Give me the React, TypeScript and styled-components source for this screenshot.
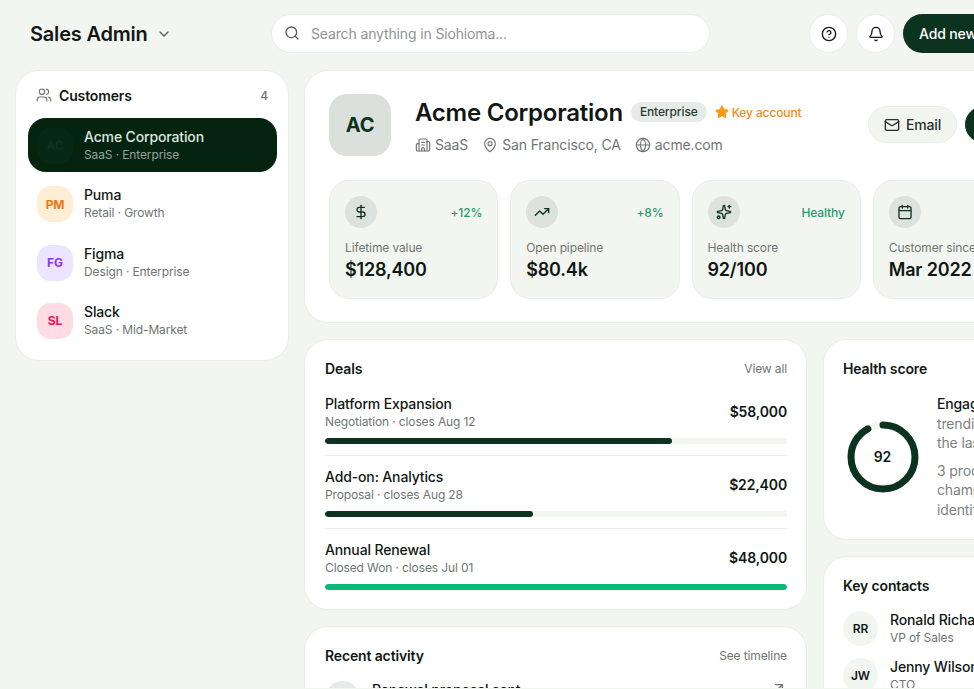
import React from 'react';
import styled, { createGlobalStyle } from 'styled-components';
import {
  ArrowUpRight,
  Bell,
  Building2,
  Calendar,
  ChevronDown,
  CircleHelp,
  DollarSign,
  Globe,
  Mail,
  MapPin,
  Search,
  Sparkles,
  Star,
  TrendingUp,
  Users,
} from 'lucide-react';

const DARK = '#0c3320';
const NIGHT = '#05240f';
const INK = '#111814';
const MUTED = '#6f7672';
const LINE = '#ebedea';
const SOFT = '#f3f5f1';

const customers = [
  { initials: 'AC', name: 'Acme Corporation', meta: 'SaaS · Enterprise', bg: '#072814', fg: '#0c3320', active: true },
  { initials: 'PM', name: 'Puma', meta: 'Retail · Growth', bg: '#ffedd5', fg: '#ea7a12' },
  { initials: 'FG', name: 'Figma', meta: 'Design · Enterprise', bg: '#ede4ff', fg: '#9333ea' },
  { initials: 'SL', name: 'Slack', meta: 'SaaS · Mid-Market', bg: '#ffdce5', fg: '#ec1358' },
];

const stats = [
  { icon: DollarSign, label: 'Lifetime value', value: '$128,400', note: '+12%' },
  { icon: TrendingUp, label: 'Open pipeline', value: '$80.4k', note: '+8%' },
  { icon: Sparkles, label: 'Health score', value: '92/100', note: 'Healthy' },
  { icon: Calendar, label: 'Customer since', value: 'Mar 2022', note: '' },
];

const deals = [
  { name: 'Platform Expansion', meta: 'Negotiation · closes Aug 12', amount: '$58,000', pct: 75, won: false },
  { name: 'Add-on: Analytics', meta: 'Proposal · closes Aug 28', amount: '$22,400', pct: 45, won: false },
  { name: 'Annual Renewal', meta: 'Closed Won · closes Jul 01', amount: '$48,000', pct: 100, won: true },
];

const GlobalStyle = createGlobalStyle`
  html, body {
    margin: 0;
    height: 689px;
    overflow: hidden;
    background: ${SOFT};
    font-family: Inter, "Liberation Sans", sans-serif;
    color: ${INK};
  }
  * {
    letter-spacing: -0.01em;
  }
`;

const Page = styled.div`
  width: 974px;
  height: 688px;
  overflow: hidden;
`;

const Canvas = styled.div`
  width: 1085px;
  padding: 14px 16px 0 15px;
  box-sizing: border-box;
`;

const TopBar = styled.header`
  display: flex;
  align-items: flex-start;
  height: 40px;
  margin-bottom: 16px;
`;

const Brand = styled.div`
  display: flex;
  align-items: center;
  gap: 8px;
  width: 241px;
  height: 39px;
  padding-left: 15px;
  font-size: 20px;
  font-weight: 600;
  svg {
    color: #555c58;
  }
`;

const SearchBox = styled.div`
  display: flex;
  align-items: center;
  gap: 11px;
  width: 439px;
  height: 39px;
  box-sizing: border-box;
  padding: 0 12px 1px;
  margin-right: 99px;
  background: #fff;
  border: 1px solid ${LINE};
  border-radius: 20px;
  font-size: 14px;
  color: #8f9591;
  svg {
    color: #555c58;
  }
`;

const RoundButton = styled.button`
  display: flex;
  align-items: center;
  justify-content: center;
  flex: none;
  width: 39px;
  height: 39px;
  padding: 0;
  margin-right: 8px;
  background: #fff;
  border: 1px solid ${LINE};
  border-radius: 50%;
  color: ${INK};
`;

const AddButton = styled.button`
  flex: none;
  width: 120px;
  height: 39px;
  padding: 0 0 1px 16px;
  text-align: left;
  background: ${DARK};
  border: 0;
  border-radius: 20px;
  font: 500 14px Inter, sans-serif;
  color: #fff;
`;

const Layout = styled.div`
  display: grid;
  grid-template-columns: 274px 1fr;
  column-gap: 15px;
  align-items: start;
`;

const Card = styled.section`
  background: #fff;
  border: 1px solid ${LINE};
  border-radius: 24px;
  box-sizing: border-box;
`;

const Sidebar = styled(Card)`
  height: 291px;
  padding: 15px 11px 15px 12px;
`;

const SideHead = styled.div`
  display: flex;
  align-items: center;
  height: 18px;
  padding: 0 9px 0 8px;
  margin-bottom: 13.6px;
  font-size: 14px;
  font-weight: 600;
  svg {
    color: ${MUTED};
    margin-right: 7px;
  }
  span:last-child {
    margin-left: auto;
    font-size: 12px;
    font-weight: 500;
    color: ${MUTED};
  }
`;

const CustomerRow = styled.div<{ $active?: boolean }>`
  display: flex;
  align-items: center;
  gap: 11px;
  box-sizing: border-box;
  height: 54.4px;
  padding: 2px 9px 0;
  margin-bottom: 4px;
  border-radius: 18px;
  background: ${p => (p.$active ? NIGHT : 'transparent')};
`;

const CustomerLogo = styled.div<{ $bg: string; $fg: string }>`
  display: flex;
  align-items: center;
  justify-content: center;
  flex: none;
  width: 36px;
  height: 36px;
  border-radius: 14px;
  background: ${p => p.$bg};
  color: ${p => p.$fg};
  font-size: 12px;
  font-weight: 700;
`;

const CustomerName = styled.div<{ $active?: boolean }>`
  font-size: 14px;
  font-weight: 500;
  line-height: 18px;
  color: ${p => (p.$active ? '#dfe5e0' : INK)};
`;

const CustomerMeta = styled.div<{ $active?: boolean }>`
  font-size: 12px;
  line-height: 18px;
  color: ${p => (p.$active ? '#93a398' : MUTED)};
`;

const Main = styled.main`
  display: flex;
  flex-direction: column;
  gap: 16px;
`;

const Overview = styled(Card)`
  height: 253px;
  padding: 23px 24px;
`;

const OverviewHead = styled.div`
  display: flex;
  align-items: flex-start;
  margin-bottom: 24px;
`;

const BigLogo = styled.div`
  display: flex;
  align-items: center;
  justify-content: center;
  flex: none;
  width: 62px;
  height: 62px;
  margin-right: 24px;
  border-radius: 18px;
  background: #dce0dd;
  color: ${DARK};
  font-size: 20px;
  font-weight: 700;
`;

const TitleBlock = styled.div`
  flex: none;
  width: 453px;
  padding-top: 2px;
`;

const TitleRow = styled.div`
  display: flex;
  align-items: center;
  height: 32px;
  margin-bottom: 7px;
`;

const Title = styled.h1`
  margin: 0 8px 0 0;
  font-size: 24px;
  font-weight: 600;
`;

const Tag = styled.span`
  padding: 2px 9px;
  margin-right: 8px;
  background: #e7ebe8;
  border-radius: 10px;
  font-size: 12px;
  font-weight: 500;
  line-height: 16px;
  color: #24412f;
`;

const KeyAccount = styled.span`
  display: flex;
  align-items: center;
  gap: 3px;
  font-size: 12px;
  font-weight: 500;
  color: #f08a24;
  svg {
    color: #fb9a0e;
    fill: #fb9a0e;
  }
`;

const MetaRow = styled.div`
  display: flex;
  gap: 14px;
  font-size: 14px;
  line-height: 20px;
  color: ${MUTED};
`;

const MetaItem = styled.span`
  display: flex;
  align-items: center;
  gap: 4px;
`;

const HeadActions = styled.div`
  display: flex;
  gap: 8px;
  padding-top: 12px;
`;

const EmailButton = styled.button`
  display: flex;
  align-items: center;
  justify-content: center;
  gap: 6px;
  width: 89px;
  height: 37px;
  padding: 0;
  background: ${SOFT};
  border: 1px solid ${LINE};
  border-radius: 19px;
  font: 500 14px Inter, sans-serif;
  color: #26302b;
`;

const CallButton = styled(EmailButton)`
  background: ${DARK};
  border-color: ${DARK};
  color: #fff;
`;

const StatGrid = styled.div`
  display: grid;
  grid-template-columns: repeat(4, 169.25px);
  gap: 12px;
`;

const StatCard = styled.div`
  height: 119px;
  box-sizing: border-box;
  padding: 15px;
  background: ${SOFT};
  border: 1px solid ${LINE};
  border-radius: 20px;
`;

const StatTop = styled.div`
  display: flex;
  align-items: center;
  justify-content: space-between;
  margin-bottom: 11px;
`;

const IconCircle = styled.div`
  display: flex;
  align-items: center;
  justify-content: center;
  width: 32px;
  height: 32px;
  border-radius: 50%;
  background: #dde2de;
  color: ${DARK};
`;

const StatNote = styled.span`
  font-size: 12px;
  font-weight: 500;
  color: #1f9d6f;
`;

const StatLabel = styled.div`
  font-size: 12px;
  line-height: 18px;
  color: ${MUTED};
`;

const StatValue = styled.div`
  font-size: 18px;
  font-weight: 600;
  line-height: 26px;
`;

const Columns = styled.div`
  display: grid;
  grid-template-columns: 503px 1fr;
  column-gap: 16px;
  align-items: start;
`;

const Stack = styled.div`
  display: flex;
  flex-direction: column;
  gap: 16px;
`;

const PanelHead = styled.div<{ $gap?: number }>`
  display: flex;
  align-items: center;
  justify-content: space-between;
  height: 18px;
  margin-bottom: ${p => p.$gap ?? 0}px;
`;

const PanelTitle = styled.h2`
  margin: 0;
  font-size: 14px;
  font-weight: 600;
`;

const PanelLink = styled.span`
  font-size: 12px;
  color: ${MUTED};
`;

const DealsCard = styled(Card)`
  height: 271px;
  padding: 19px 19px 19px 20px;
`;

const DealRow = styled.div<{ $last?: boolean }>`
  padding: 12px 0 ${p => (p.$last ? 0 : '11px')};
  border-bottom: ${p => (p.$last ? 'none' : `1px solid ${LINE}`)};
  ${PanelHead} + & {
    padding-top: 0;
  }
`;

const DealTop = styled.div`
  display: flex;
  align-items: center;
  justify-content: space-between;
  margin-bottom: 7px;
`;

const DealName = styled.div`
  font-size: 14px;
  font-weight: 500;
  line-height: 18px;
`;

const DealMeta = styled.div`
  font-size: 12px;
  line-height: 18px;
  color: ${MUTED};
`;

const DealAmount = styled.div`
  margin-bottom: 3px;
  font-size: 14px;
  font-weight: 600;
`;

const Track = styled.div`
  height: 6px;
  border-radius: 3px;
  background: ${SOFT};
  overflow: hidden;
`;

const Fill = styled.div<{ $won: boolean }>`
  height: 100%;
  border-radius: 3px;
  background: ${p => (p.$won ? '#0ab877' : DARK)};
`;

const ActivityCard = styled(Card)`
  height: 120px;
  padding: 19px 19px 19px 20px;
`;

const ActivityRow = styled.div`
  display: flex;
  align-items: flex-start;
  gap: 12px;
  font-size: 14px;
  font-weight: 500;
  line-height: 18px;
  svg {
    margin: -1px 0 0 auto;
    color: ${MUTED};
  }
`;

const ActivityIcon = styled.div`
  flex: none;
  width: 35px;
  height: 35px;
  border-radius: 50%;
  background: #e7ebe8;
`;

const HealthCard = styled(Card)`
  height: 201px;
  padding: 19px 19px;
`;

const HealthBody = styled.div`
  display: flex;
  align-items: center;
  gap: 18.5px;
`;

const Ring = styled.div`
  position: relative;
  flex: none;
  width: 72px;
  height: 72px;
  margin-left: 3.5px;
`;

const RingValue = styled.span`
  position: absolute;
  inset: 0;
  display: flex;
  align-items: center;
  justify-content: center;
  font-size: 14px;
  font-weight: 600;
`;

const HealthStrong = styled.div`
  margin-bottom: 8px;
  font-size: 14px;
  line-height: 19.6px;
  color: #7c837f;
  strong {
    font-weight: 500;
    color: ${INK};
  }
`;

const HealthText = styled.div`
  font-size: 14px;
  line-height: 19.6px;
  color: #7c837f;
`;

const ContactsCard = styled(Card)`
  height: 200px;
  padding: 19px 19px;
`;

const ContactList = styled.div`
  display: flex;
  flex-direction: column;
  gap: 12px;
`;

const ContactRow = styled.div`
  display: flex;
  align-items: center;
  gap: 12px;
  height: 35px;
`;

const ContactBadge = styled.div`
  display: flex;
  align-items: center;
  justify-content: center;
  flex: none;
  width: 35px;
  height: 35px;
  border-radius: 50%;
  background: ${SOFT};
  font-size: 12px;
  font-weight: 600;
`;

const ContactName = styled.div`
  font-size: 14px;
  font-weight: 500;
  line-height: 18px;
`;

const ContactRole = styled.div`
  font-size: 12px;
  line-height: 18px;
  color: ${MUTED};
`;

export default function App() {
  return (
    <>
      <GlobalStyle />
      <Page>
        <Canvas>
          <TopBar>
            <Brand>
              Sales Admin
              <ChevronDown size={16} strokeWidth={2} />
            </Brand>
            <SearchBox>
              <Search size={16} strokeWidth={2} />
              Search anything in Siohioma...
            </SearchBox>
            <RoundButton>
              <CircleHelp size={16} strokeWidth={2} />
            </RoundButton>
            <RoundButton>
              <Bell size={16} strokeWidth={2} />
            </RoundButton>
            <AddButton>Add new</AddButton>
          </TopBar>
          <Layout>
            <Sidebar as="aside">
              <SideHead>
                <Users size={16} strokeWidth={1.75} />
                <span>Customers</span>
                <span>4</span>
              </SideHead>
              {customers.map(c => (
                <CustomerRow key={c.name} $active={c.active}>
                  <CustomerLogo $bg={c.bg} $fg={c.fg}>
                    {c.initials}
                  </CustomerLogo>
                  <div>
                    <CustomerName $active={c.active}>{c.name}</CustomerName>
                    <CustomerMeta $active={c.active}>{c.meta}</CustomerMeta>
                  </div>
                </CustomerRow>
              ))}
            </Sidebar>
            <Main>
              <Overview>
                <OverviewHead>
                  <BigLogo>AC</BigLogo>
                  <TitleBlock>
                    <TitleRow>
                      <Title>Acme Corporation</Title>
                      <Tag>Enterprise</Tag>
                      <KeyAccount>
                        <Star size={14} />
                        Key account
                      </KeyAccount>
                    </TitleRow>
                    <MetaRow>
                      <MetaItem>
                        <Building2 size={16} strokeWidth={1.75} />
                        SaaS
                      </MetaItem>
                      <MetaItem>
                        <MapPin size={16} strokeWidth={1.75} />
                        San Francisco, CA
                      </MetaItem>
                      <MetaItem>
                        <Globe size={16} strokeWidth={1.75} />
                        acme.com
                      </MetaItem>
                    </MetaRow>
                  </TitleBlock>
                  <HeadActions>
                    <EmailButton>
                      <Mail size={16} />
                      Email
                    </EmailButton>
                    <CallButton>Call</CallButton>
                  </HeadActions>
                </OverviewHead>
                <StatGrid>
                  {stats.map(s => (
                    <StatCard key={s.label}>
                      <StatTop>
                        <IconCircle>
                          <s.icon size={16} />
                        </IconCircle>
                        <StatNote>{s.note}</StatNote>
                      </StatTop>
                      <StatLabel>{s.label}</StatLabel>
                      <StatValue>{s.value}</StatValue>
                    </StatCard>
                  ))}
                </StatGrid>
              </Overview>
              <Columns>
                <Stack>
                  <DealsCard>
                    <PanelHead $gap={18}>
                      <PanelTitle>Deals</PanelTitle>
                      <PanelLink>View all</PanelLink>
                    </PanelHead>
                    {deals.map((d, i) => (
                      <DealRow key={d.name} $last={i === deals.length - 1}>
                        <DealTop>
                          <div>
                            <DealName>{d.name}</DealName>
                            <DealMeta>{d.meta}</DealMeta>
                          </div>
                          <DealAmount>{d.amount}</DealAmount>
                        </DealTop>
                        <Track>
                          <Fill $won={d.won} style={{ width: `${d.pct}%` }} />
                        </Track>
                      </DealRow>
                    ))}
                  </DealsCard>
                  <ActivityCard>
                    <PanelHead $gap={17}>
                      <PanelTitle>Recent activity</PanelTitle>
                      <PanelLink>See timeline</PanelLink>
                    </PanelHead>
                    <ActivityRow>
                      <ActivityIcon />
                      <span>Renewal proposal sent</span>
                      <ArrowUpRight size={16} />
                    </ActivityRow>
                  </ActivityCard>
                </Stack>
                <Stack>
                  <HealthCard>
                    <PanelHead $gap={17}>
                      <PanelTitle>Health score</PanelTitle>
                    </PanelHead>
                    <HealthBody>
                      <Ring>
                        <svg width="72" height="72" viewBox="0 0 72 72">
                          <circle cx="36" cy="36" r="32" fill="none" stroke={SOFT} strokeWidth="7" />
                          <circle
                            cx="36"
                            cy="36"
                            r="32"
                            fill="none"
                            stroke={DARK}
                            strokeWidth="7"
                            strokeLinecap="round"
                            strokeDasharray={`${2 * Math.PI * 32 * 0.92} ${2 * Math.PI * 32}`}
                            transform="rotate(-90 36 36)"
                          />
                        </svg>
                        <RingValue>92</RingValue>
                      </Ring>
                      <div>
                        <HealthStrong>
                          <strong>Engagement</strong> trending up over the last
                        </HealthStrong>
                        <HealthText>3 product champions identified</HealthText>
                      </div>
                    </HealthBody>
                  </HealthCard>
                  <ContactsCard>
                    <PanelHead $gap={17}>
                      <PanelTitle>Key contacts</PanelTitle>
                    </PanelHead>
                    <ContactList>
                      <ContactRow>
                        <ContactBadge>RR</ContactBadge>
                        <div>
                          <ContactName>Ronald Richards</ContactName>
                          <ContactRole>VP of Sales</ContactRole>
                        </div>
                      </ContactRow>
                      <ContactRow>
                        <ContactBadge>JW</ContactBadge>
                        <div>
                          <ContactName>Jenny Wilson</ContactName>
                          <ContactRole>CTO</ContactRole>
                        </div>
                      </ContactRow>
                    </ContactList>
                  </ContactsCard>
                </Stack>
              </Columns>
            </Main>
          </Layout>
        </Canvas>
      </Page>
    </>
  );
}
